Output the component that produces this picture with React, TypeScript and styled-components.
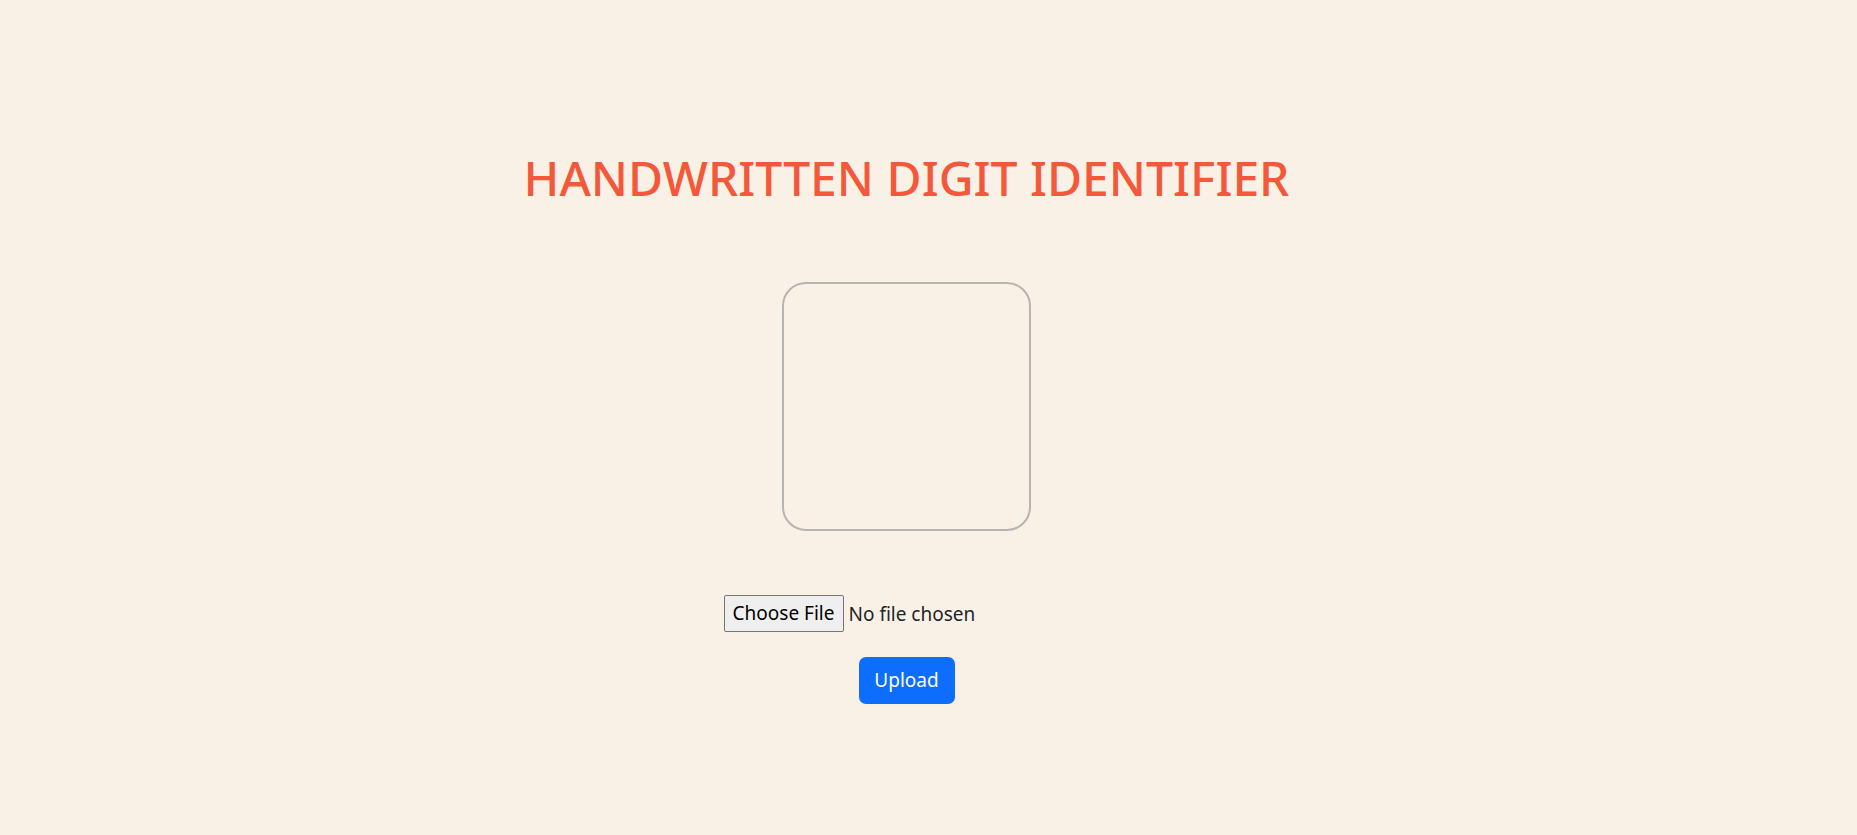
import React from "react";
import styled, { createGlobalStyle } from "styled-components";

const GlobalStyle = createGlobalStyle`
  html, body {
    margin: 0;
    padding: 0;
    background: #faf1e6;
  }
  body {
    font-family: "Segoe UI", "Noto Sans", "Open Sans", sans-serif;
    color: #212529;
  }
  * {
    box-sizing: border-box;
  }
`;

export default function App() {
  return (
    <>
      <GlobalStyle />
      <Page>
        <Title>HANDWRITTEN DIGIT IDENTIFIER</Title>
        <DrawBox />
        <UploadForm onSubmit={(e) => e.preventDefault()}>
          <FileInput type="file" accept="image/*" />
          <UploadBtn type="submit">Upload</UploadBtn>
        </UploadForm>
      </Page>
    </>
  );
}

// ===== Styled Components =====

const Page = styled.div`
  min-height: 100vh;
  display: flex;
  flex-direction: column;
  align-items: center;
  padding: 149px 44px 0 0;
`;

const Title = styled.h1`
  margin: 0;
  font-size: 48px;
  font-weight: 500;
  line-height: 1.2;
  color: #f4583a;
  letter-spacing: 0;
`;

const DrawBox = styled.div`
  margin-top: 75px;
  width: 249px;
  height: 249px;
  border: 2px solid #b6b4b2;
  border-radius: 24px;
`;

const UploadForm = styled.form`
  margin-top: 64px;
  width: 366px;
  display: flex;
  flex-direction: column;
  gap: 25px;
`;

const FileInput = styled.input`
  font-family: "Segoe UI", "Noto Sans", "Open Sans", sans-serif;
  font-size: 19px;
  color: #212529;
  height: 37px;

  &::file-selector-button {
    font-family: inherit;
    font-size: 19px;
    color: #000;
    background: #efefef;
    border: 1px solid #767676;
    border-radius: 2px;
    height: 37px;
    width: 120px;
    padding: 0;
    margin-right: 5px;
  }
`;

const UploadBtn = styled.button`
  align-self: center;
  width: 96px;
  height: 47px;
  background: #0d6efd;
  color: #fff;
  border: none;
  border-radius: 7px;
  font-family: "Segoe UI", "Noto Sans", "Open Sans", sans-serif;
  font-size: 19px;
  cursor: pointer;

  &:hover {
    background: #0b5ed7;
  }
`;
